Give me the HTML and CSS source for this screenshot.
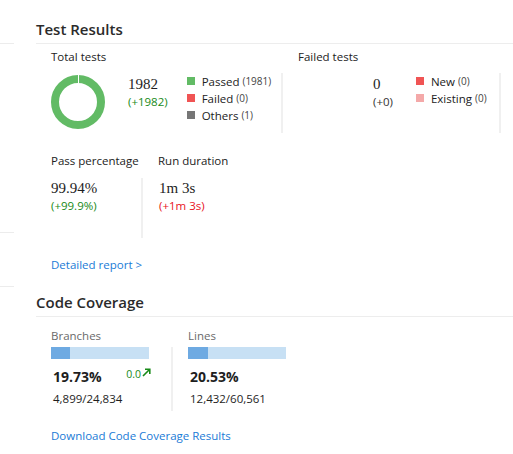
FILE: index.html
```html
<!DOCTYPE html>
<html lang="en">
<head>
<meta charset="utf-8">
<title>Test Results</title>
<link rel="stylesheet" href="styles.css">
</head>
<body>
<div class="page">
  <div class="side">
    <div class="side-a"></div>
    <div class="side-b"></div>
    <div class="side-c"></div>
  </div>
  <div class="main">
    <section class="section">
      <h2 class="heading">Test Results</h2>
      <div class="body">
        <div class="row row-top">
          <div class="card card-total">
            <div class="label">Total tests</div>
            <div class="box box-top">
              <svg class="donut" width="54" height="54" viewBox="0 0 54 54">
                <circle cx="27" cy="27" r="23" fill="none" stroke="#62bb65" stroke-width="8"/>
                <line x1="27.5" y1="0" x2="27.5" y2="8.5" stroke="#fff" stroke-width="1"/>
              </svg>
              <div class="nums">
                <div class="num">1982</div>
                <div class="delta good">(+1982)</div>
              </div>
              <ul class="legend">
                <li><span class="sw sw-pass"></span>Passed <span class="cnt">(1981)</span></li>
                <li><span class="sw sw-fail"></span>Failed <span class="cnt">(0)</span></li>
                <li><span class="sw sw-other"></span>Others <span class="cnt">(1)</span></li>
              </ul>
            </div>
          </div>
          <div class="card card-failed">
            <div class="label">Failed tests</div>
            <div class="box box-top">
              <div class="chart-space"></div>
              <div class="nums">
                <div class="num">0</div>
                <div class="delta">(+0)</div>
              </div>
              <ul class="legend">
                <li><span class="sw sw-fail"></span>New <span class="cnt">(0)</span></li>
                <li><span class="sw sw-exist"></span>Existing <span class="cnt">(0)</span></li>
              </ul>
            </div>
          </div>
        </div>
        <div class="row row-metrics">
          <div class="metric metric-pass">
            <div class="label">Pass percentage</div>
            <div class="box box-metric sep">
              <div class="num">99.94%</div>
              <div class="delta good">(+99.9%)</div>
            </div>
          </div>
          <div class="metric metric-dur">
            <div class="label">Run duration</div>
            <div class="box box-metric">
              <div class="num">1m 3s</div>
              <div class="delta bad">(+1m 3s)</div>
            </div>
          </div>
        </div>
        <a class="link link-report" href="#">Detailed report &gt;</a>
      </div>
    </section>
    <section class="section">
      <h2 class="heading">Code Coverage</h2>
      <div class="body">
        <div class="row">
          <div class="cov cov-branches">
            <div class="label muted">Branches</div>
            <div class="cov-box sep">
              <div class="bar"><div class="bar-fill" style="width:19.73%"></div></div>
              <div class="cov-stats">
                <span class="pct">19.73%</span>
                <span class="trend">0.0<svg class="arrow" width="9" height="9" viewBox="0 0 9 9"><path d="M1 8 L7.5 1.5 M3 1.2 H7.8 V6" fill="none" stroke="#188a18" stroke-width="1.6"/></svg></span>
              </div>
              <div class="ratio">4,899/24,834</div>
            </div>
          </div>
          <div class="cov cov-lines">
            <div class="label muted">Lines</div>
            <div class="cov-box">
              <div class="bar"><div class="bar-fill" style="width:20.53%"></div></div>
              <div class="cov-stats">
                <span class="pct">20.53%</span>
              </div>
              <div class="ratio">12,432/60,561</div>
            </div>
          </div>
        </div>
        <a class="link link-download" href="#">Download Code Coverage Results</a>
      </div>
    </section>
  </div>
</div>
</body>
</html>
```

FILE: styles.css
```css
html, body {
  margin: 0;
  padding: 0;
  background: #fff;
}
body {
  font-family: "Open Sans", "Noto Sans", sans-serif;
  font-size: 11.5px;
  color: #222;
}
.page {
  display: flex;
  align-items: flex-start;
}
.side {
  width: 14px;
  flex: none;
}
.side-a, .side-b, .side-c {
  border-bottom: 1px solid #ececec;
}
.side-a { height: 43px; }
.side-b { height: 188px; }
.side-c { height: 53px; }

.main {
  flex: 1;
  margin-left: 22px;
}
.heading {
  margin: 0;
  padding: 18px 0 3px;
  line-height: 22px;
  font-size: 15px;
  font-weight: 600;
  color: #2b2b2b;
  border-bottom: 1px solid #ededed;
}
.body {
  padding-left: 15px;
}
.row {
  display: flex;
  align-items: flex-start;
}
.label {
  line-height: 16px;
  color: #222;
}
.label.muted {
  color: #6a6a6a;
}
.box {
  display: flex;
  align-items: flex-start;
}
.row-top {
  margin-top: 5px;
}
.box-top {
  margin-top: 8px;
  height: 60px;
  border-right: 2px solid #f0f0f0;
  box-sizing: border-box;
}
.card-total .box-top { width: 232px; }
.card-failed { margin-left: 15px; }
.card-failed .box-top { width: 203px; }

.donut {
  display: block;
  margin-top: 2px;
  margin-right: 23px;
}
.chart-space {
  width: 75px;
  flex: none;
}
.nums {
  margin-top: 3px;
  margin-right: 19px;
}
.card-failed .nums {
  margin-right: 23px;
}
.num {
  font-family: "Liberation Serif", "Times New Roman", serif;
  font-size: 15px;
  line-height: 17px;
  color: #1e1e1e;
}
.delta {
  line-height: 17px;
  color: #333;
}
.delta.good { color: #188a18; }
.delta.bad { color: #e81123; }

.legend {
  list-style: none;
  margin: 0;
  padding: 0;
}
.legend li {
  display: flex;
  align-items: center;
  line-height: 17px;
  white-space: nowrap;
}
.sw {
  width: 8px;
  height: 8px;
  margin-right: 7px;
  margin-top: -2px;
  flex: none;
}
.sw-pass { background: #62bb65; }
.sw-fail { background: #f05454; }
.sw-other { background: #767676; }
.sw-exist { background: #f4a9a9; }
.cnt {
  font-size: 10px;
  color: #444;
  margin-left: 3px;
}

.row-metrics {
  margin-top: 20px;
}
.box-metric {
  flex-direction: column;
  margin-top: 9px;
  height: 60px;
  padding-top: 2px;
  box-sizing: border-box;
}
.metric-pass .box-metric { width: 92px; }
.box-metric.sep { border-right: 2px solid #f0f0f0; }
.metric-dur { margin-left: 15px; }
.metric-dur .box-metric { padding-left: 1px; }

.link {
  display: block;
  width: max-content;
  line-height: 17px;
  color: #1a7bd6;
  text-decoration: none;
}
.link-report { margin-top: 18px; }
.link-download { margin-top: 17px; line-height: 16px; }

.cov {
  margin-top: 11px;
}
.cov-box {
  margin-top: 3px;
  width: 122px;
  height: 64px;
  box-sizing: border-box;
}
.cov-box.sep { border-right: 2px solid #f0f0f0; }
.cov-lines { margin-left: 15px; }
.bar {
  width: 98px;
  height: 12px;
  background: #c7e0f4;
}
.bar-fill {
  height: 100%;
  background: #6eaae2;
}
.cov-stats {
  width: 100px;
  display: flex;
  justify-content: space-between;
  align-items: center;
  margin-top: 7px;
  padding-left: 2px;
  box-sizing: border-box;
  height: 20px;
}
.pct {
  font-size: 14px;
  font-weight: 700;
  color: #1e1e1e;
}
.trend {
  display: flex;
  align-items: center;
  font-size: 10.5px;
  color: #188a18;
  margin-top: -5px;
}
.arrow {
  display: block;
  margin-left: 1px;
  margin-top: -2px;
}
.ratio {
  margin-top: 5px;
  padding-left: 2px;
  line-height: 16px;
  color: #1e1e1e;
}
```
